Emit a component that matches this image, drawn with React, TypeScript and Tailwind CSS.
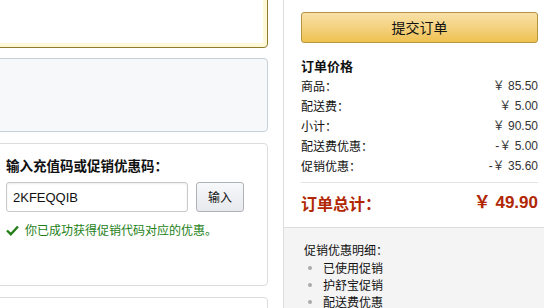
import React from "react";

const cjk = { fontFamily: '"Noto Sans CJK SC", "Liberation Sans", sans-serif' };
const num = { fontFamily: '"Liberation Sans", "Noto Sans CJK SC", sans-serif' };

function Row({ label, value }: { label: string; value: string }) {
  return (
    <div className="flex h-[20px] items-center justify-between text-[12px] text-[#111]">
      <span style={cjk}>{label}</span>
      <span style={num} className="text-[#333]">{value}</span>
    </div>
  );
}

export default function App() {
  return (
    <div className="flex h-[308px] w-[544px] overflow-hidden bg-white" style={cjk}>
      <div className="flex w-[283px] shrink-0 flex-col pr-[15px]">
        <div className="-ml-[10px] -mt-[20px] h-[68px] shrink-0 rounded-[4px] border border-[#8f7d2c] bg-white shadow-[inset_0_0_0_4px_#fff8d8]" />
        <div className="-ml-[10px] mt-[10px] h-[74px] shrink-0 rounded-[4px] border border-[#c6d0d9] bg-[#f7f8fa]" />
        <div className="-ml-[10px] mt-[11px] flex h-[143px] shrink-0 flex-col rounded-[4px] border border-[#dddddd] bg-white pl-[15px]">
          <div className="mt-[11px] text-[13.5px] font-bold text-[#111]">输入充值码或促销优惠码：</div>
          <div className="mt-[7px] flex items-center gap-[8px]">
            <div className="flex h-[30px] w-[182px] items-center rounded-[3px] border border-[#c9c9c9] pl-[6px] text-[13px] text-[#111] shadow-[inset_0_1px_2px_rgba(0,0,0,0.08)]" style={num}>
              2KFEQQIB
            </div>
            <div className="flex h-[30px] w-[48px] items-center justify-center rounded-[3px] border border-[#adb1b8] bg-gradient-to-b from-[#f7f8fa] to-[#e7e9ec] text-[12px] text-[#111]">
              输入
            </div>
          </div>
          <div className="mt-[9px] flex items-center gap-[6px] text-[12px] text-[#247f18]">
            <svg width="13" height="11" viewBox="0 0 13 11">
              <path d="M1 5.5 L4.8 9.2 L12 1.5" fill="none" stroke="#247f18" strokeWidth="2.4" />
            </svg>
            <span>你已成功获得促销代码对应的优惠。</span>
          </div>
        </div>
        <div className="-ml-[10px] mt-[11px] h-[40px] shrink-0 rounded-[4px] border border-[#dddddd] bg-white" />
      </div>
      <div className="flex w-[261px] shrink-0 flex-col border-l border-[#dddddd]">
        <div className="pl-[17px] pr-[6px]">
          <div className="mt-[12px] flex h-[31px] items-center justify-center rounded-[3px] border border-[#b4953e] bg-gradient-to-b from-[#f8e1a7] to-[#efc14f] text-[14px] text-[#111]">
            提交订单
          </div>
          <div className="mt-[13px] text-[13px] font-bold leading-[20px] text-[#111]">订单价格</div>
          <Row label="商品：" value="￥ 85.50" />
          <Row label="配送费：" value="￥ 5.00" />
          <Row label="小计：" value="￥ 90.50" />
          <Row label="配送费优惠：" value="-￥ 5.00" />
          <Row label="促销优惠：" value="-￥ 35.60" />
          <div className="mt-[6px] border-t border-[#e4e4e4]" />
          <div className="flex h-[40px] items-center justify-between text-[#b12704]">
            <span className="text-[16px] font-bold">订单总计：</span>
            <span className="text-[17px] font-bold" style={num}>￥ 49.90</span>
          </div>
        </div>
        <div className="mt-[4px] flex-1 border-t border-[#dddddd] bg-[#f4f4f4] pl-[20px] pt-[13px] text-[12px] text-[#111]">
          <div className="leading-[18px]">促销优惠明细：</div>
          <ul>
            {["已使用促销", "护舒宝促销", "配送费优惠"].map((t) => (
              <li key={t} className="flex h-[17px] items-center">
                <span className="ml-[4px] mr-[11px] h-[4px] w-[4px] rounded-full bg-[#aaaaaa]" />
                {t}
              </li>
            ))}
          </ul>
        </div>
      </div>
    </div>
  );
}
